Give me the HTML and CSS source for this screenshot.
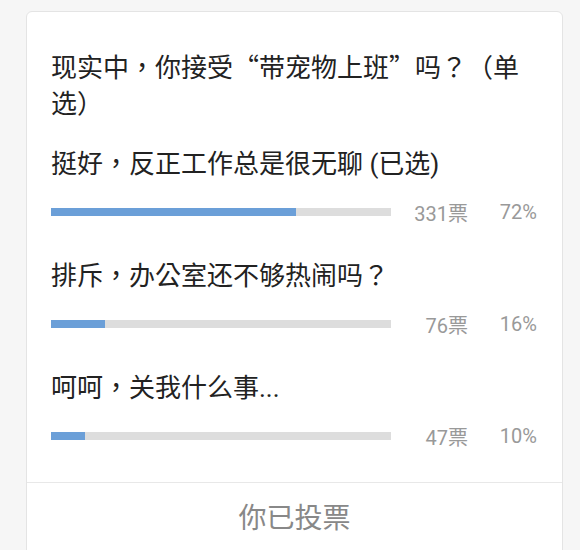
FILE: index.html
```html
<!DOCTYPE html>
<html lang="zh-TW">
<head>
    <meta charset="UTF-8">
    <meta name="viewport" content="width=device-width, initial-scale=1.0">
    <title>投票</title>
    <link rel="stylesheet" href="styles.css">
</head>
<body>
    <div class="poll-card">
        <div class="poll-body">
            <h2 class="poll-title">现实中，你接受“带宠物上班”吗？（单选）</h2>

            <div class="poll-option">
                <p class="option-label">挺好，反正工作总是很无聊 (已选)</p>
                <div class="option-stats">
                    <div class="bar-track"><div class="bar-fill" style="width: 72%"></div></div>
                    <span class="vote-count">331票</span>
                    <span class="vote-pct">72%</span>
                </div>
            </div>

            <div class="poll-option">
                <p class="option-label">排斥，办公室还不够热闹吗？</p>
                <div class="option-stats">
                    <div class="bar-track"><div class="bar-fill" style="width: 16%"></div></div>
                    <span class="vote-count">76票</span>
                    <span class="vote-pct">16%</span>
                </div>
            </div>

            <div class="poll-option">
                <p class="option-label">呵呵，关我什么事...</p>
                <div class="option-stats">
                    <div class="bar-track"><div class="bar-fill" style="width: 10%"></div></div>
                    <span class="vote-count">47票</span>
                    <span class="vote-pct">10%</span>
                </div>
            </div>
        </div>

        <div class="poll-footer">你已投票</div>
    </div>
</body>
</html>
```

FILE: styles.css
```css
html, body {
    height: 100%;
    overflow: hidden;
}

body {
    margin: 0;
    background-color: #f6f6f6;
    font-family: Roboto, "Noto Sans CJK TC", "Noto Sans CJK SC", sans-serif;
    color: #222;
}

.poll-card {
    margin: 11px 17px 0 26px;
    background-color: #fff;
    border: 1px solid #e4e4e4;
    border-radius: 6px;
}

.poll-body {
    padding: 36px 25px 26px 24px;
}

.poll-title {
    margin: 0;
    font-family: "Noto Sans CJK TC", "Noto Sans CJK SC", sans-serif;
    font-size: 26px;
    font-weight: normal;
    line-height: 36px;
}

.poll-option {
    padding: 26px 0 8px;
}

.option-label {
    margin: 0;
    font-size: 26px;
    line-height: 36px;
}

.option-stats {
    display: flex;
    align-items: center;
    height: 24px;
    margin-top: 18px;
    font-size: 20px;
    color: #999;
}

.bar-track {
    width: 340px;
    height: 8px;
    background-color: #ddd;
}

.bar-fill {
    height: 100%;
    background-color: #6b9fd8;
}

.vote-count {
    width: 77px;
    text-align: right;
}

.vote-pct {
    flex: 1;
    text-align: right;
}

.poll-footer {
    border-top: 1px solid #e8e8e8;
    padding: 18px 0 40px;
    text-align: center;
    font-size: 28px;
    line-height: 36px;
    color: #888;
}
```
